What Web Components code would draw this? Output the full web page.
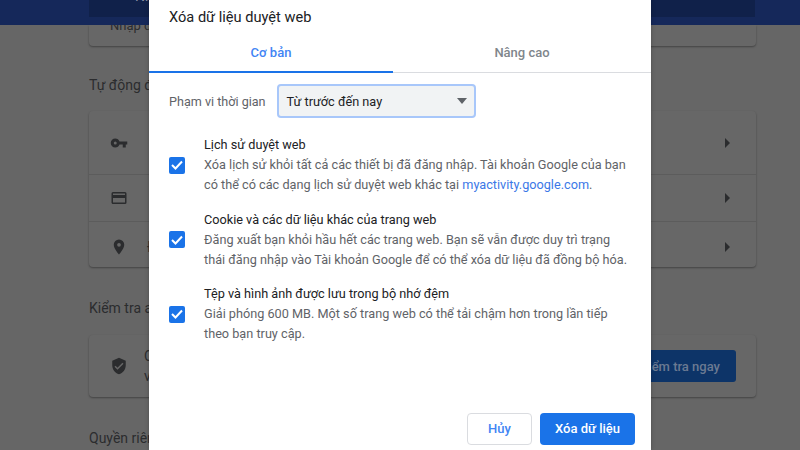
<!DOCTYPE html>
<html lang="vi">
<head>
<meta charset="utf-8">
<title>Xóa dữ liệu duyệt web</title>
<style>
  html, body { margin: 0; height: 100%; overflow: hidden; background: #666; }
  body { font-family: Roboto, "Liberation Sans", sans-serif; }
</style>
</head>
<body>
<settings-page>
  <clear-dialog></clear-dialog>
</settings-page>

<template id="settings-tpl">
  <style>
    :host { display: block; position: relative; width: 800px; height: 450px; overflow: hidden; background: #666; color: #2b2c2e; font-size: 14px; }
    header { position: relative; z-index: 1; height: 25px; background: #15285a; padding: 0 45px 0 89px; }
    .search { height: 17px; background: #10214a; display: flex; align-items: flex-start; gap: 16px; padding-left: 16px; color: #8a93a8; font-size: 14px; overflow: hidden; }
    .search svg { flex: none; margin-top: -12px; }
    .search span { line-height: 16px; margin-top: -12px; }
    main { padding: 0 44px 0 89px; display: flex; flex-direction: column; }
    .card { background: #676767; border-radius: 4px; box-shadow: 0 1px 2px rgba(0,0,0,.35); }
    .card.top { height: 21px; border-top-left-radius: 0; border-top-right-radius: 0; padding-left: 21px; font-size: 13px; line-height: 2px; }
    h2 { margin: 0; font-weight: 400; font-size: 14px; line-height: 20px; }
    .auto { margin-top: 29px; }
    .list { margin-top: 16px; }
    .row { height: 46px; display: flex; align-items: center; padding: 0 25px 0 21px; border-top: 1px solid #5c5c5c; }
    .row:first-child { height: 63px; border-top: 0; }
    .row:last-child { box-sizing: border-box; height: 46px; padding-top: 4px; }
    .row svg { display: block; flex: none; }
    .row .chev { margin-left: auto; }
    .row span { margin-left: 19px; }
    .check { margin-top: 31px; }
    .safety { margin-top: 17px; height: 62px; display: flex; align-items: center; padding: 0 20px 0 21px; }
    .safety p { margin: 0 0 0 16px; line-height: 20px; }
    .btn { margin-left: auto; width: 96px; height: 32px; background: #0d3468; color: #6b7a92; border-radius: 3px; font-weight: 500; font-size: 13px; display: flex; align-items: center; justify-content: flex-end; padding-right: 16px; box-sizing: border-box; }
    .privacy { margin-top: 31px; }
  </style>
  <header>
    <div class="search">
      <svg width="14" height="14" viewBox="0 0 24 24" fill="#8a93a8"><path d="M15.500 14h-.79l-.28-.27A6.470 6.470 0 0 0 16 9.500 6.500 6.500 0 1 0 9.500 16c1.610 0 3.090-.59 4.230-1.570l.27.28v.79l5 5L20.490 19l-5-5zm-6 0A4.500 4.500 0 1 1 14 9.500 4.490 4.490 0 0 1 9.500 14z"/></svg>
      <span>Nh</span>
    </div>
  </header>
  <main>
    <div class="card top">Nhập d</div>
    <h2 class="auto">Tự động điền</h2>
    <div class="card list">
      <div class="row">
        <svg width="18" height="18" viewBox="0 0 24 24" fill="#2b2c2e"><path d="M12.650 10A6 6 0 0 0 7 6a6 6 0 0 0 0 12 6 6 0 0 0 5.650-4H17v4h4v-4h2v-4H12.650zM7 14a2 2 0 1 1 0-4 2 2 0 0 1 0 4z"/></svg>
        <svg class="chev" width="6" height="10" viewBox="0 0 6 10" fill="#2b2c2e"><path d="M0 0l5 5-5 5z"/></svg>
      </div>
      <div class="row">
        <svg width="18" height="18" viewBox="0 0 24 24" fill="#2b2c2e"><path d="M20 4H4a2 2 0 0 0-2 2v12c0 1.100.9 2 2 2h16a2 2 0 0 0 2-2V6a2 2 0 0 0-2-2zm0 14H4v-6h16v6zm0-10H4V6h16v2z"/></svg>
        <svg class="chev" width="6" height="10" viewBox="0 0 6 10" fill="#2b2c2e"><path d="M0 0l5 5-5 5z"/></svg>
      </div>
      <div class="row">
        <svg width="18" height="18" viewBox="0 0 24 24" fill="#2b2c2e"><path d="M12 2a7 7 0 0 0-7 7c0 5.250 7 13 7 13s7-7.750 7-13a7 7 0 0 0-7-7zm0 9.500a2.500 2.500 0 1 1 0-5 2.500 2.500 0 0 1 0 5z"/></svg>
        <span>Địa chỉ</span>
        <svg class="chev" width="6" height="10" viewBox="0 0 6 10" fill="#2b2c2e"><path d="M0 0l5 5-5 5z"/></svg>
      </div>
    </div>
    <h2 class="check">Kiểm tra an toàn</h2>
    <div class="card safety">
      <svg width="18" height="18" viewBox="0 0 24 24" fill="#2b2c2e"><path d="M12 1L3 5v6c0 5.550 3.840 10.740 9 12 5.160-1.260 9-6.450 9-12V5l-9-4zm-2 16l-4-4 1.410-1.410L10 14.170l6.590-6.590L18 9l-8 8z"/></svg>
      <p>Chrome có thể giúp bạn<br>vi phạm dữ liệu</p>
      <div class="btn">Kiểm tra ngay</div>
    </div>
    <h2 class="privacy">Quyền riêng tư</h2>
  </main>
  <slot></slot>
</template>

<template id="dialog-tpl">
  <style>
    :host { display: flex; flex-direction: column; position: absolute; z-index: 2; left: 149px; top: 0; width: 502px; height: 450px; background: #fff; color: #202124; box-shadow: 0 0 4px rgba(0,0,0,.25); }
    .title { font-size: 14.6px; line-height: 20px; padding: 7px 20px 0; }
    .tabs { display: flex; margin-top: 14px; height: 31px; border-bottom: 1px solid #dadce0; font-size: 13px; font-weight: 500; }
    .tab { flex: 1; text-align: center; line-height: 24px; color: #80868b; box-sizing: border-box; height: 32px; }
    .tab.on { color: #4285f4; border-bottom: 2px solid #1a73e8; flex: 0 0 244px; }
    .range { display: flex; align-items: center; padding: 11px 0 0 20px; gap: 11px; font-size: 12.6px; color: #5f6368; }
    .select { width: 199px; height: 34px; box-sizing: border-box; border: 2px solid #a8c7fa; border-radius: 4px; background: #f1f3f4; color: #202124; font-size: 12.7px; display: flex; align-items: center; justify-content: space-between; padding: 0 7px 0 8px; }
    .select i { width: 0; height: 0; border: 5.500px solid transparent; border-top: 6px solid #5f6368; border-bottom: 0; }
    .items { display: flex; flex-direction: column; gap: 14.5px; padding: 17px 0 0 20px; flex: 1; }
    .foot { display: flex; justify-content: flex-end; gap: 8px; padding: 0 16px 5px; }
    button { font: 500 13px Roboto, sans-serif; height: 32px; border-radius: 4px; box-sizing: border-box; padding-bottom: 2px; }
    .cancel { width: 65px; background: #fff; color: #4285f4; border: 1px solid #dadce0; }
    .ok { width: 95px; background: #1a73e8; color: #fff; border: 0; }
    a { color: #3b78e7; }
  </style>
  <div class="title">Xóa dữ liệu duyệt web</div>
  <div class="tabs"><div class="tab on">Cơ bản</div><div class="tab">Nâng cao</div></div>
  <div class="range">Phạm vi thời gian <div class="select">Từ trước đến nay<i></i></div></div>
  <div class="items">
    <check-item label="Lịch sử duyệt web">Xóa lịch sử khỏi tất cả các thiết bị đã đăng nhập. Tài khoản Google của bạn<br>có thể có các dạng lịch sử duyệt web khác tại <a>myactivity.google.com</a>.</check-item>
    <check-item label="Cookie và các dữ liệu khác của trang web">Đăng xuất bạn khỏi hầu hết các trang web. Bạn sẽ vẫn được duy trì trạng<br>thái đăng nhập vào Tài khoản Google để có thể xóa dữ liệu đã đồng bộ hóa.</check-item>
    <check-item label="Tệp và hình ảnh được lưu trong bộ nhớ đệm">Giải phóng 600 MB. Một số trang web có thể tải chậm hơn trong lần tiếp<br>theo bạn truy cập.</check-item>
  </div>
  <div class="foot"><button class="cancel">Hủy</button><button class="ok">Xóa dữ liệu</button></div>
</template>

<template id="item-tpl">
  <style>
    :host { display: flex; align-items: center; gap: 19px; font-size: 12.7px; line-height: 20px; }
    .box { width: 16px; height: 17px; background: #1a73e8; border-radius: 2px; display: flex; align-items: center; justify-content: center; flex: none; }
    .label { color: #202124; }
    .desc { color: #5f6368; }
  </style>
  <div class="box"><svg width="12" height="10" viewBox="0 0 12 10" fill="none" stroke="#fff" stroke-width="2"><path d="M1 5l3.500 3.500L11 1.500"/></svg></div>
  <div><div class="label"></div><div class="desc"><slot></slot></div></div>
</template>

<script>
  "use strict";
  function mount(el, id) {
    el.attachShadow({ mode: "open" }).appendChild(document.getElementById(id).content.cloneNode(true));
  }
  class SettingsPage extends HTMLElement {
    constructor() { super(); mount(this, "settings-tpl"); }
  }
  class ClearDialog extends HTMLElement {
    constructor() { super(); mount(this, "dialog-tpl"); }
  }
  class CheckItem extends HTMLElement {
    constructor() { super(); mount(this, "item-tpl"); }
    connectedCallback() {
      this.shadowRoot.querySelector(".label").textContent = this.getAttribute("label");
    }
  }
  customElements.define("check-item", CheckItem);
  customElements.define("clear-dialog", ClearDialog);
  customElements.define("settings-page", SettingsPage);
</script>
</body>
</html>
